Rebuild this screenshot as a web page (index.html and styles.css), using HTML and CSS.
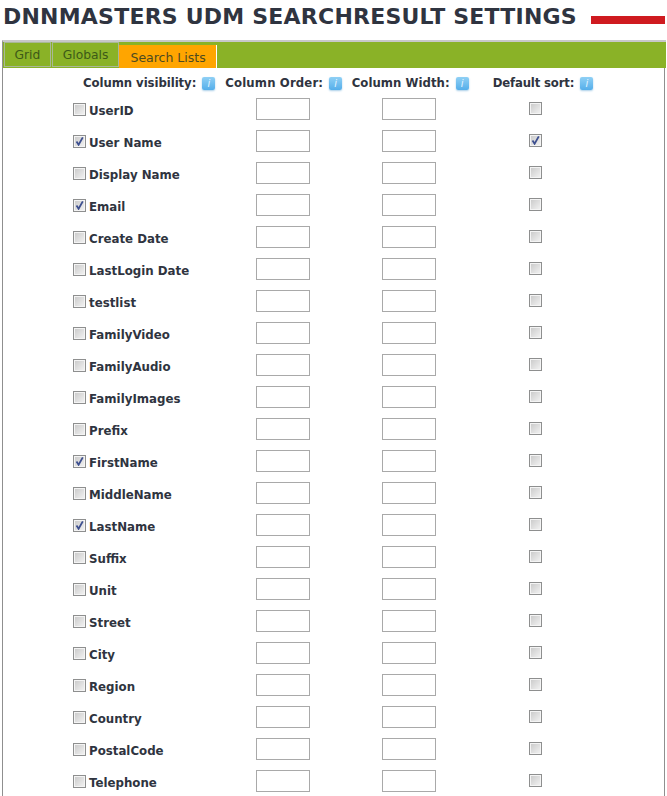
FILE: index.html
```html
<!DOCTYPE html>
<html lang="en">
<head>
    <meta charset="UTF-8">
    <title>DNNMasters UDM Searchresult Settings</title>
    <link rel="stylesheet" href="styles.css">
</head>
<body>
    <div class="title-row">
        <h1>DNNMASTERS UDM SEARCHRESULT SETTINGS</h1>
        <div class="title-bar"></div>
    </div>

    <div class="tabs">
        <a class="tab">Grid</a>
        <a class="tab">Globals</a>
        <a class="tab active">Search Lists</a>
    </div>

    <div class="panel">
        <div class="heads">
            <div class="head head-visibility">Column visibility: <span class="info">i</span></div>
            <div class="head head-order">Column Order: <span class="info">i</span></div>
            <div class="head head-width">Column Width: <span class="info">i</span></div>
            <div class="head head-sort">Default sort: <span class="info">i</span></div>
        </div>

        <div class="row"><label class="name"><input type="checkbox">UserID</label><input class="num" type="text"><input class="num" type="text"><input class="sort" type="checkbox"></div>
        <div class="row"><label class="name"><input type="checkbox" checked>User Name</label><input class="num" type="text"><input class="num" type="text"><input class="sort" type="checkbox" checked></div>
        <div class="row"><label class="name"><input type="checkbox">Display Name</label><input class="num" type="text"><input class="num" type="text"><input class="sort" type="checkbox"></div>
        <div class="row"><label class="name"><input type="checkbox" checked>Email</label><input class="num" type="text"><input class="num" type="text"><input class="sort" type="checkbox"></div>
        <div class="row"><label class="name"><input type="checkbox">Create Date</label><input class="num" type="text"><input class="num" type="text"><input class="sort" type="checkbox"></div>
        <div class="row"><label class="name"><input type="checkbox">LastLogin Date</label><input class="num" type="text"><input class="num" type="text"><input class="sort" type="checkbox"></div>
        <div class="row"><label class="name"><input type="checkbox">testlist</label><input class="num" type="text"><input class="num" type="text"><input class="sort" type="checkbox"></div>
        <div class="row"><label class="name"><input type="checkbox">FamilyVideo</label><input class="num" type="text"><input class="num" type="text"><input class="sort" type="checkbox"></div>
        <div class="row"><label class="name"><input type="checkbox">FamilyAudio</label><input class="num" type="text"><input class="num" type="text"><input class="sort" type="checkbox"></div>
        <div class="row"><label class="name"><input type="checkbox">FamilyImages</label><input class="num" type="text"><input class="num" type="text"><input class="sort" type="checkbox"></div>
        <div class="row"><label class="name"><input type="checkbox">Prefix</label><input class="num" type="text"><input class="num" type="text"><input class="sort" type="checkbox"></div>
        <div class="row"><label class="name"><input type="checkbox" checked>FirstName</label><input class="num" type="text"><input class="num" type="text"><input class="sort" type="checkbox"></div>
        <div class="row"><label class="name"><input type="checkbox">MiddleName</label><input class="num" type="text"><input class="num" type="text"><input class="sort" type="checkbox"></div>
        <div class="row"><label class="name"><input type="checkbox" checked>LastName</label><input class="num" type="text"><input class="num" type="text"><input class="sort" type="checkbox"></div>
        <div class="row"><label class="name"><input type="checkbox">Suffix</label><input class="num" type="text"><input class="num" type="text"><input class="sort" type="checkbox"></div>
        <div class="row"><label class="name"><input type="checkbox">Unit</label><input class="num" type="text"><input class="num" type="text"><input class="sort" type="checkbox"></div>
        <div class="row"><label class="name"><input type="checkbox">Street</label><input class="num" type="text"><input class="num" type="text"><input class="sort" type="checkbox"></div>
        <div class="row"><label class="name"><input type="checkbox">City</label><input class="num" type="text"><input class="num" type="text"><input class="sort" type="checkbox"></div>
        <div class="row"><label class="name"><input type="checkbox">Region</label><input class="num" type="text"><input class="num" type="text"><input class="sort" type="checkbox"></div>
        <div class="row"><label class="name"><input type="checkbox">Country</label><input class="num" type="text"><input class="num" type="text"><input class="sort" type="checkbox"></div>
        <div class="row"><label class="name"><input type="checkbox">PostalCode</label><input class="num" type="text"><input class="num" type="text"><input class="sort" type="checkbox"></div>
        <div class="row"><label class="name"><input type="checkbox">Telephone</label><input class="num" type="text"><input class="num" type="text"><input class="sort" type="checkbox"></div>
    </div>
</body>
</html>
```

FILE: styles.css
```css
html {
    overflow: hidden;
}

body {
    margin: 0;
    background: #fff;
    color: #2f3440;
    font-family: "DejaVu Sans", Verdana, sans-serif;
}

.title-row {
    display: flex;
    align-items: center;
    justify-content: space-between;
    height: 40px;
    padding: 0 2px 8px 3px;
    box-sizing: border-box;
}

.title-row h1 {
    margin: 0;
    font-size: 22px;
    font-weight: bold;
    letter-spacing: 0.22px;
    white-space: nowrap;
}

.title-bar {
    width: 74px;
    height: 8px;
    margin-top: 8px;
    background: #cf1a20;
}

.tabs {
    display: flex;
    align-items: flex-end;
    gap: 1.5px;
    height: 26px;
    margin: 0 1px 0 2px;
    padding-left: 1px;
    background: #8ab227;
    border-top: 2px solid #c8c8c8;
    border-left: 1px solid #8f8f8f;
}

.tab {
    display: flex;
    align-items: center;
    box-sizing: border-box;
    height: 25px;
    margin-bottom: 1px;
    padding: 0 9.5px;
    font-size: 12.3px;
    color: #3d5a17;
    border: 1px solid #a9b896;
}

.tab.active {
    height: 23px;
    margin: 0 0 0 -1px;
    padding: 1px 10px 0 11px;
    font-size: 12.5px;
    color: #4d4a20;
    background: #ffa500;
    border: 0;
    border-right: 1px solid #fff;
}

.panel {
    margin: 0 2px;
    padding-bottom: 20px;
    border-left: 1px solid #8f8f8f;
    border-right: 1px solid #8f8f8f;
}

.heads {
    display: flex;
    height: 20px;
    padding-top: 5px;
    align-items: center;
    font-size: 11.7px;
    font-weight: bold;
}

.head {
    display: flex;
    align-items: center;
    gap: 6px;
    white-space: nowrap;
}

.head-visibility { margin-left: 80px; letter-spacing: -0.06px; }
.head-order { margin-left: 10px; letter-spacing: 0.15px; }
.head-width { margin-left: 9.5px; letter-spacing: 0.05px; }
.head-sort { margin-left: 24px; letter-spacing: -0.15px; }

.info {
    width: 13px;
    height: 13px;
    border-radius: 2px;
    background: linear-gradient(#8fd0f5, #55aeea);
    box-shadow: 0 1px 2px #aacfe8;
    color: #e6f5ff;
    font-size: 10px;
    font-style: italic;
    font-weight: normal;
    line-height: 13px;
    text-align: center;
}

.row {
    display: grid;
    grid-template-columns: 253px 126px 147px 1fr;
    align-items: center;
    height: 32px;
}

.name {
    display: flex;
    align-items: center;
    gap: 3px;
    padding-left: 70px;
    padding-top: 3px;
    font-size: 11.8px;
    font-weight: bold;
}

.name input {
    margin-bottom: 2px;
}

.num {
    box-sizing: border-box;
    width: 54px;
    height: 22px;
    margin: 0;
    border: 1px solid #a9a9a9;
    background: #fff;
}

input[type="checkbox"] {
    appearance: none;
    width: 13px;
    height: 13px;
    margin-top: 0;
    margin-left: 0;
    margin-right: 0;
    border: 1px solid #8e8f8f;
    box-shadow: inset 0 0 0 1px #f4f4f4;
    background: linear-gradient(135deg, #c8c8c8, #f4f4f4);
}

input[type="checkbox"]:checked {
    background: url("data:image/svg+xml,%3Csvg xmlns='http://www.w3.org/2000/svg' viewBox='0 0 11 11'%3E%3Cpath d='M2.5 5.5L4.6 8.8L8.8 1.4' fill='none' stroke='%233d4f8f' stroke-width='1.8'/%3E%3C/svg%3E"), linear-gradient(135deg, #c8c8c8, #f4f4f4);
}

.sort {
    margin-bottom: 1px;
}
```
